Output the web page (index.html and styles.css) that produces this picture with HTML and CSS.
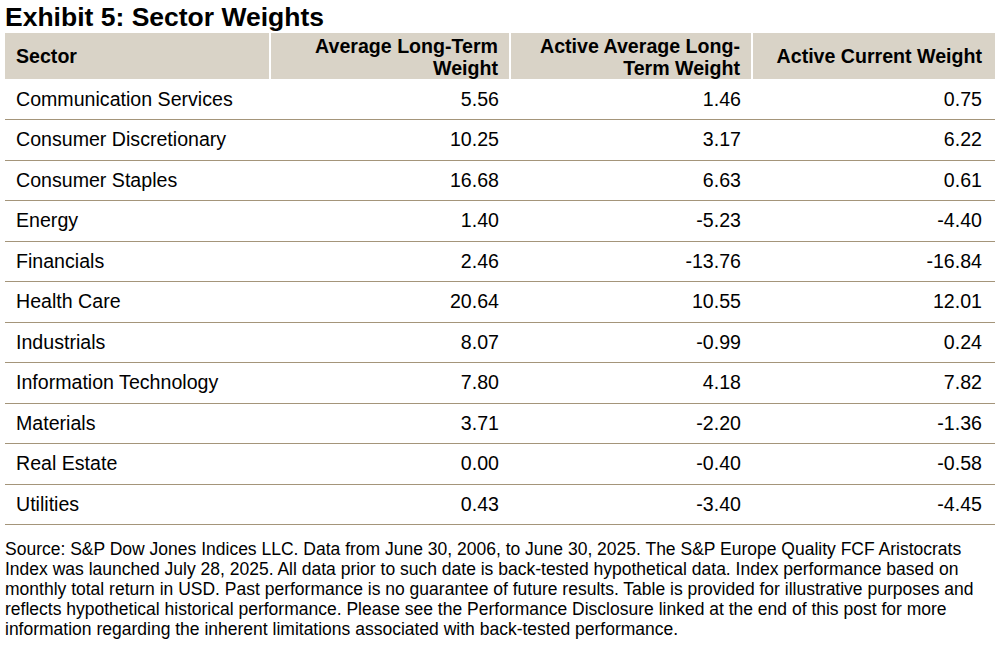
FILE: index.html
```html
<!DOCTYPE html>
<html>
<head>
<meta charset="utf-8">
<link rel="stylesheet" href="styles.css">
</head>
<body>
<div class="wrap">
<h1 class="title">Exhibit 5: Sector Weights</h1>
<table class="tbl">
<thead>
<tr><th class="c1">Sector</th><th class="c2">Average Long-Term Weight</th><th class="c3">Active Average Long-<br>Term Weight</th><th class="c4">Active Current Weight</th></tr>
</thead>
<tbody>
<tr><td>Communication Services</td><td>5.56</td><td>1.46</td><td>0.75</td></tr>
<tr><td>Consumer Discretionary</td><td>10.25</td><td>3.17</td><td>6.22</td></tr>
<tr><td>Consumer Staples</td><td>16.68</td><td>6.63</td><td>0.61</td></tr>
<tr><td>Energy</td><td>1.40</td><td>-5.23</td><td>-4.40</td></tr>
<tr><td>Financials</td><td>2.46</td><td>-13.76</td><td>-16.84</td></tr>
<tr><td>Health Care</td><td>20.64</td><td>10.55</td><td>12.01</td></tr>
<tr><td>Industrials</td><td>8.07</td><td>-0.99</td><td>0.24</td></tr>
<tr><td>Information Technology</td><td>7.80</td><td>4.18</td><td>7.82</td></tr>
<tr><td>Materials</td><td>3.71</td><td>-2.20</td><td>-1.36</td></tr>
<tr><td>Real Estate</td><td>0.00</td><td>-0.40</td><td>-0.58</td></tr>
<tr><td>Utilities</td><td>0.43</td><td>-3.40</td><td>-4.45</td></tr>
</tbody>
</table>
<p class="note">Source: S&amp;P Dow Jones Indices LLC. Data from June 30, 2006, to June 30, 2025. The S&amp;P Europe Quality FCF Aristocrats Index was launched July 28, 2025. All data prior to such date is back-tested hypothetical data. Index performance based on monthly total return in USD. Past performance is no guarantee of future results. Table is provided for illustrative purposes and reflects hypothetical historical performance. Please see the Performance Disclosure linked at the end of this post for more information regarding the inherent limitations associated with back-tested performance.</p>
</div>
</body>
</html>
```
FILE: styles.css
```css
html, body { margin: 0; padding: 0; background: #fff; }
body { font-family: "Liberation Sans", Arial, sans-serif; color: #000; }
.wrap { padding: 2px 6px 0 5px; width: 990px; }
.title { font-size: 26.5px; font-weight: bold; margin: 0; line-height: 31px; height: 31px; }
.tbl { border-collapse: collapse; width: 990px; table-layout: fixed; }
.tbl th { background: #d9d3c7; font-size: 19.6px; font-weight: bold; line-height: 22px; height: 45px; padding: 0 11px 0 11px; text-align: right; vertical-align: middle; border-left: 2px solid #fff; box-sizing: border-box; }
.tbl th.c1 { text-align: left; border-left: none; width: 265px; }
.tbl th.c2 { width: 240px; }
.tbl th.c3 { width: 242px; }
.tbl td { font-size: 19.6px; height: 40.5px; padding: 0 11px; text-align: right; vertical-align: middle; border-bottom: 1.5px solid #a4957a; box-sizing: border-box; }
.tbl td:first-child { text-align: left; }
.tbl td:last-child { padding-right: 13px; }
.tbl th.c4 { padding-right: 13px; }
.tbl th.c2, .tbl th.c3 { padding-top: 2px; }
.note { font-size: 17.5px; line-height: 20px; margin: 14px 0 0 0; width: 972px; }
```
